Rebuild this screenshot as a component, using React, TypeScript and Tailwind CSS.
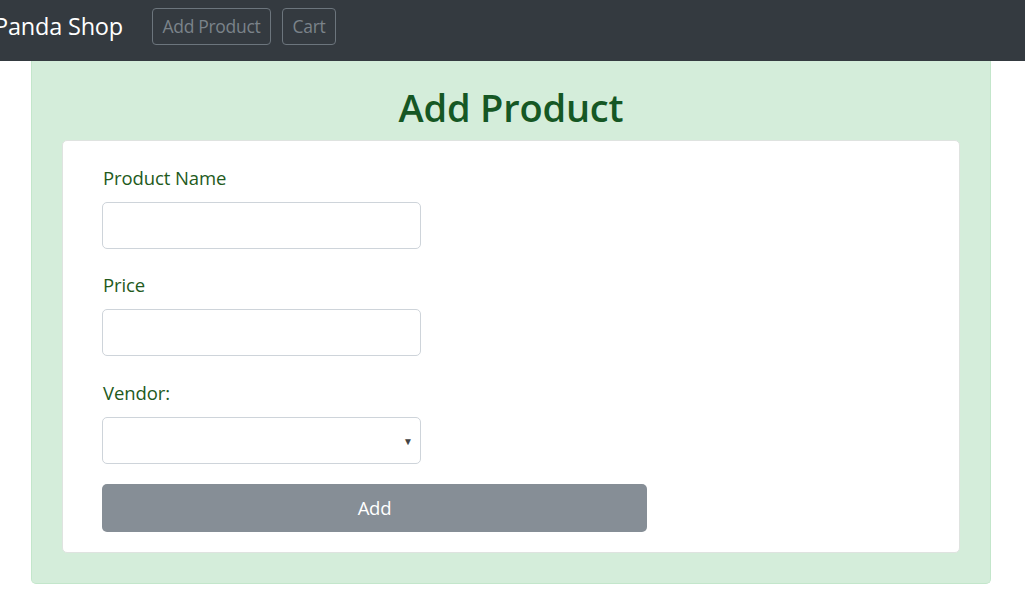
import { useState } from 'react';

const font = { fontFamily: '"Open Sans", "Noto Sans", Arial, sans-serif' };

export default function App() {
  const [name, setName] = useState('');
  const [price, setPrice] = useState('');
  const [vendor, setVendor] = useState('');

  return (
    <div className="min-h-[595px] bg-white overflow-hidden" style={font}>
      {/* Navbar */}
      <nav className="h-[61px] bg-[#343a40] flex items-center pb-[9px]">
        <span className="ml-[-6px] mt-[2px] text-[23.5px] text-white tracking-[-0.2px]">Panda Shop</span>
        <div className="flex items-center gap-[11px] ml-[29px]">
          <button className="h-[37px] w-[119px] rounded-[4px] border border-[#6c757d] text-[#7b838a] text-[17.5px] tracking-[-0.3px]">
            Add Product
          </button>
          <button className="h-[37px] w-[54px] rounded-[4px] border border-[#6c757d] text-[#7b838a] text-[17.5px] tracking-[-0.3px]">
            Cart
          </button>
        </div>
      </nav>

      {/* Green container */}
      <div className="ml-[31px] w-[960px] h-[523px] bg-[#d4edda] border border-t-0 border-[#c3e6cb] rounded-b-[5px] px-[30px] text-[#155724]">
        <h1 className="h-[79px] pt-[22px] text-center text-[38px] leading-[48px] font-semibold tracking-[-0.2px]">
          Add Product
        </h1>
        <div className="bg-white border border-[#dfe3e0] rounded-[5px] h-[413px] pt-[23px] px-[39px]">
          <label className="block ml-[1px] text-[18.5px] leading-[27px] tracking-[-0.1px] text-[#235a1c]">Product Name</label>
          <input
            value={name}
            onChange={e => setName(e.target.value)}
            className="mt-[11px] block w-[319px] h-[47px] rounded-[5px] border border-[#ced4da] outline-none px-3"
          />
          <label className="block ml-[1px] mt-[22px] text-[18.5px] leading-[27px] tracking-[-0.1px] text-[#235a1c]">Price</label>
          <input
            value={price}
            onChange={e => setPrice(e.target.value)}
            className="mt-[11px] block w-[319px] h-[47px] rounded-[5px] border border-[#ced4da] outline-none px-3"
          />
          <label className="block ml-[1px] mt-[23px] text-[18.5px] leading-[27px] tracking-[-0.1px] text-[#235a1c]">Vendor:</label>
          <div className="relative mt-[11px] w-[319px]">
            <select
              value={vendor}
              onChange={e => setVendor(e.target.value)}
              className="appearance-none block w-[319px] h-[47px] rounded-[5px] border border-[#ced4da] bg-white outline-none px-3"
            >
              <option value=""></option>
            </select>
            <span className="pointer-events-none absolute right-[8px] top-[17px] text-[10px] text-[#444]">▼</span>
          </div>
          <button className="mt-[20px] block w-[545px] h-[48px] rounded-[5px] bg-[#868e96] text-white text-[18.5px] tracking-[-0.2px]">
            Add
          </button>
        </div>
      </div>
    </div>
  );
}
